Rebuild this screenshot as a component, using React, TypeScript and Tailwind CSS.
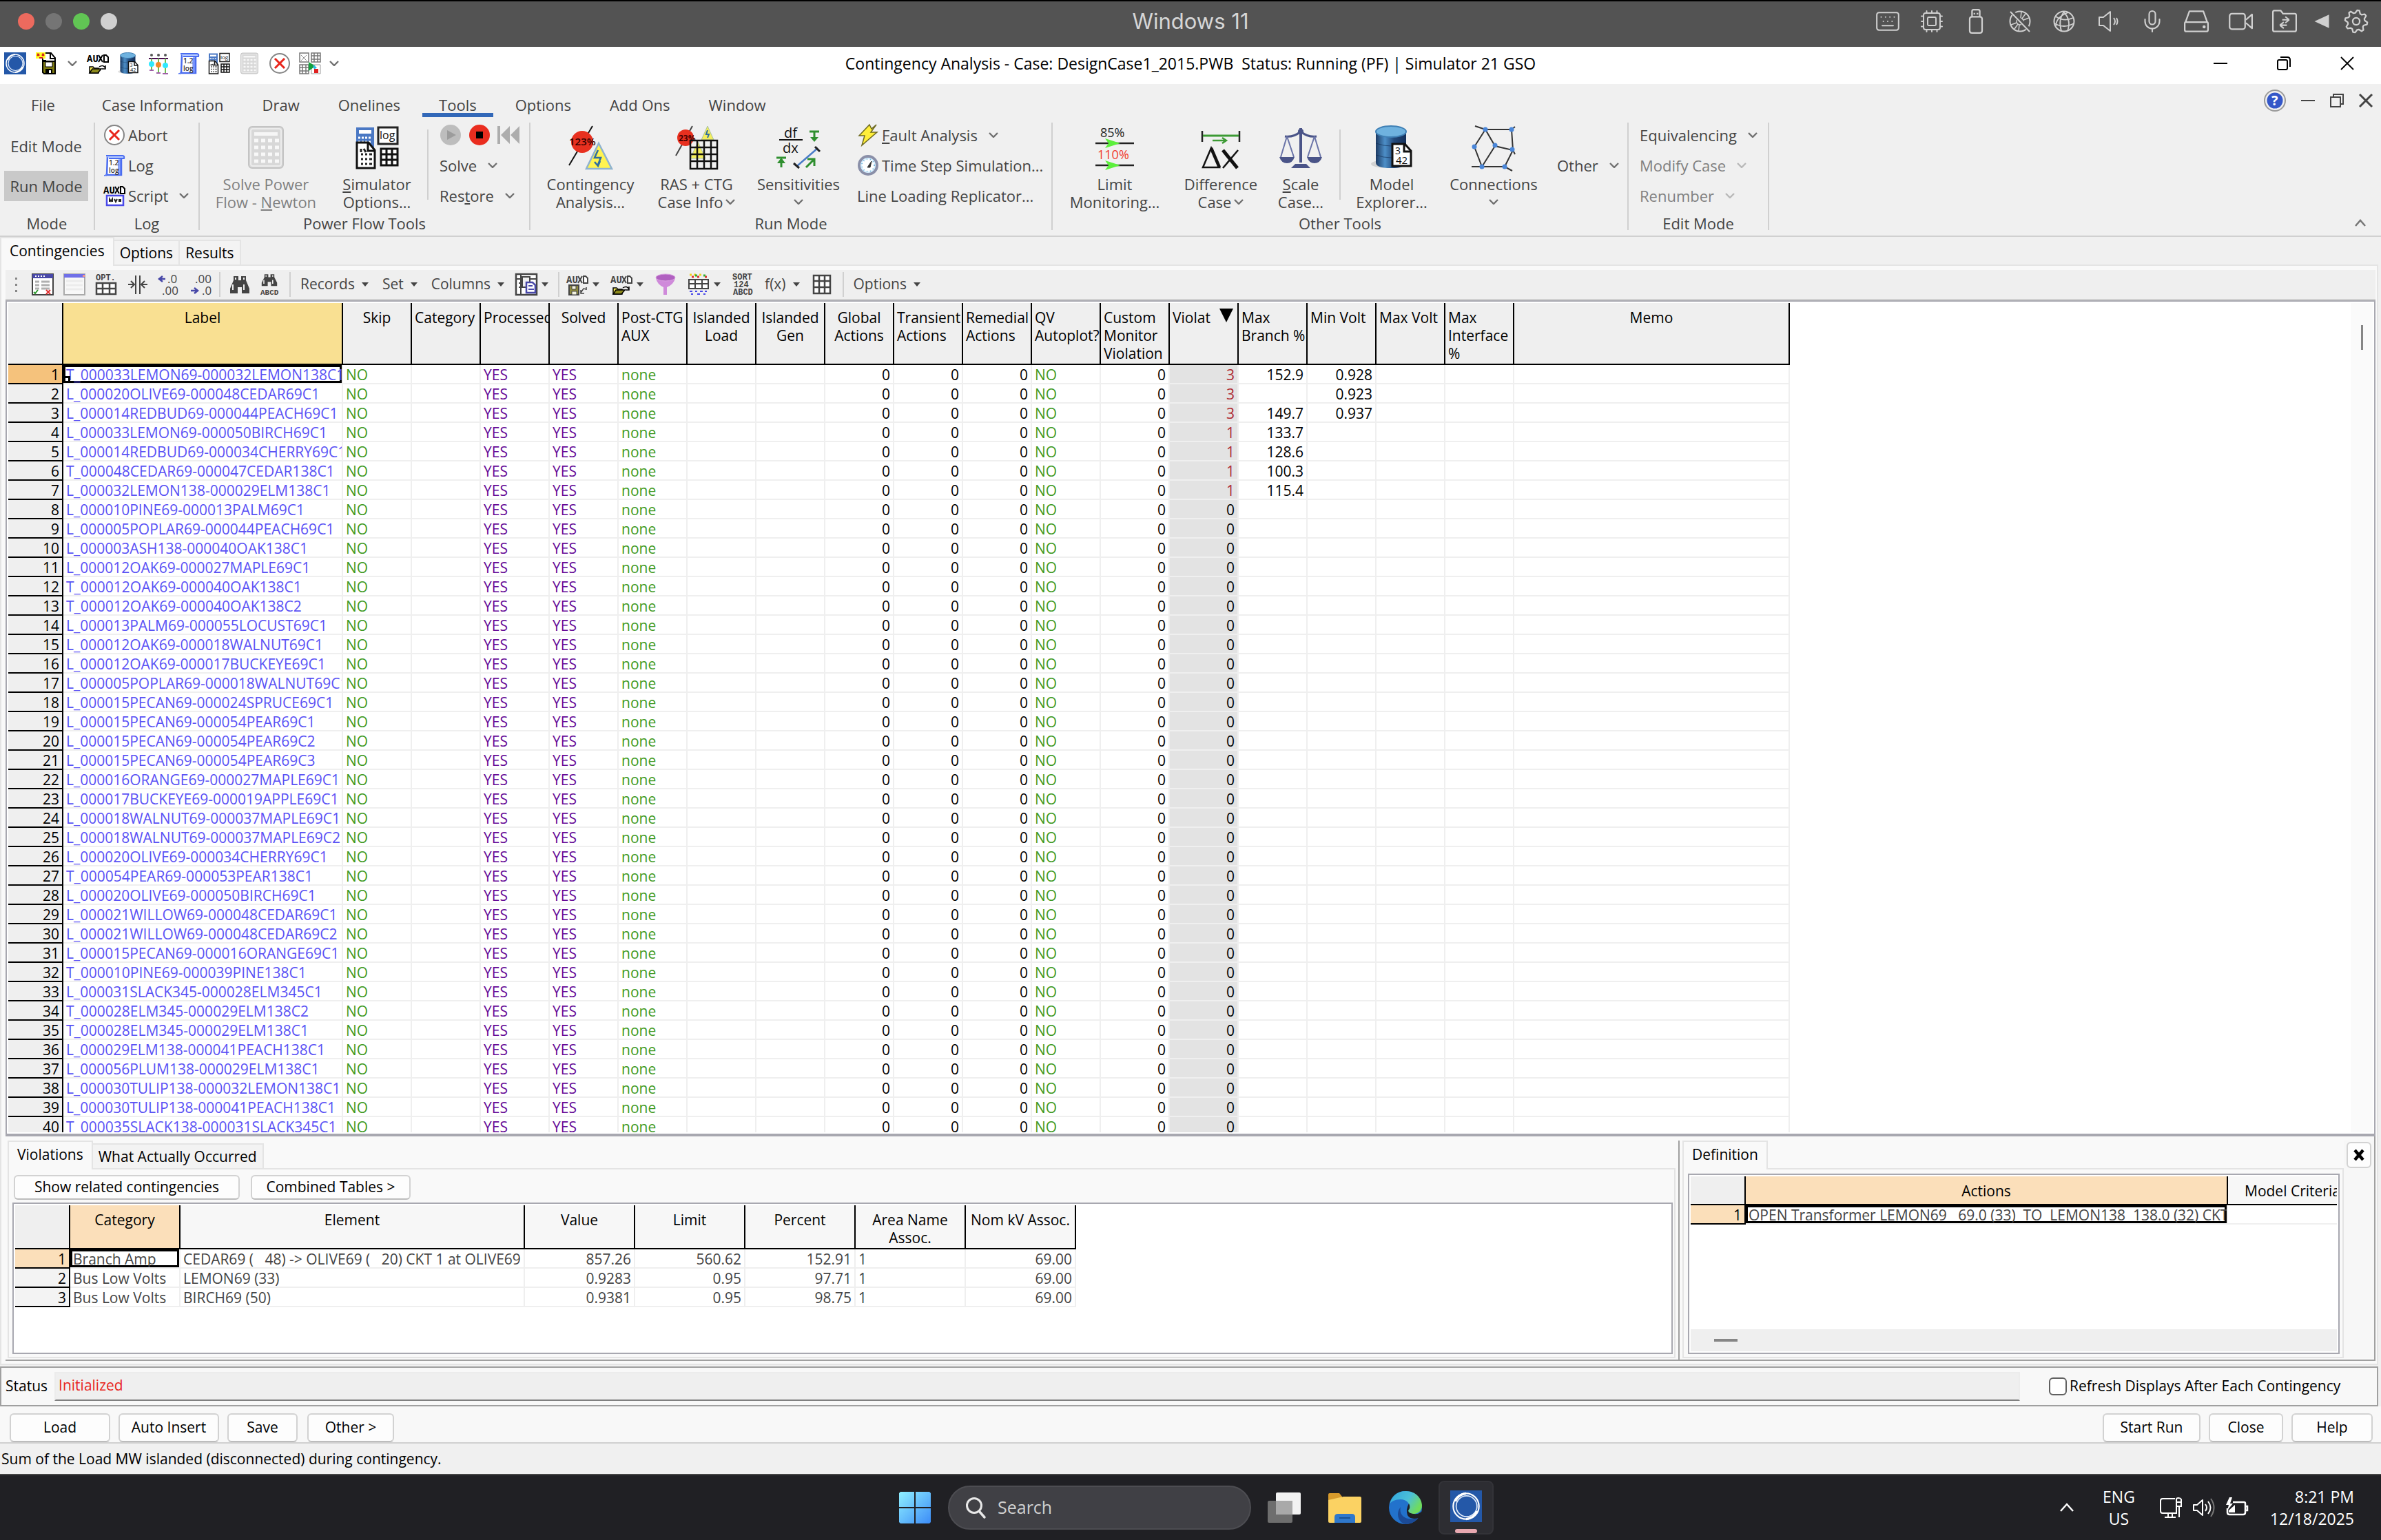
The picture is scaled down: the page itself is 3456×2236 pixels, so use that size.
import type { ReactNode } from 'react'
import { Cpu, Keyboard, Mic } from 'lucide-react'

const contingencies = [
  'T_000033LEMON69-000032LEMON138C1',
  'L_000020OLIVE69-000048CEDAR69C1',
  'L_000014REDBUD69-000044PEACH69C1',
  'L_000033LEMON69-000050BIRCH69C1',
  'L_000014REDBUD69-000034CHERRY69C1',
  'T_000048CEDAR69-000047CEDAR138C1',
  'L_000032LEMON138-000029ELM138C1',
  'L_000010PINE69-000013PALM69C1',
  'L_000005POPLAR69-000044PEACH69C1',
  'L_000003ASH138-000040OAK138C1',
  'L_000012OAK69-000027MAPLE69C1',
  'T_000012OAK69-000040OAK138C1',
  'T_000012OAK69-000040OAK138C2',
  'L_000013PALM69-000055LOCUST69C1',
  'L_000012OAK69-000018WALNUT69C1',
  'L_000012OAK69-000017BUCKEYE69C1',
  'L_000005POPLAR69-000018WALNUT69C1',
  'L_000015PECAN69-000024SPRUCE69C1',
  'L_000015PECAN69-000054PEAR69C1',
  'L_000015PECAN69-000054PEAR69C2',
  'L_000015PECAN69-000054PEAR69C3',
  'L_000016ORANGE69-000027MAPLE69C1',
  'L_000017BUCKEYE69-000019APPLE69C1',
  'L_000018WALNUT69-000037MAPLE69C1',
  'L_000018WALNUT69-000037MAPLE69C2',
  'L_000020OLIVE69-000034CHERRY69C1',
  'T_000054PEAR69-000053PEAR138C1',
  'L_000020OLIVE69-000050BIRCH69C1',
  'L_000021WILLOW69-000048CEDAR69C1',
  'L_000021WILLOW69-000048CEDAR69C2',
  'L_000015PECAN69-000016ORANGE69C1',
  'T_000010PINE69-000039PINE138C1',
  'L_000031SLACK345-000028ELM345C1',
  'T_000028ELM345-000029ELM138C2',
  'T_000028ELM345-000029ELM138C1',
  'L_000029ELM138-000041PEACH138C1',
  'L_000056PLUM138-000029ELM138C1',
  'L_000030TULIP138-000032LEMON138C1',
  'L_000030TULIP138-000041PEACH138C1',
  'T_000035SLACK138-000031SLACK345C1',
]

// violations, max branch %, min volt for the first rows
const results = [
  ['3', '152.9', '0.928'],
  ['3', '', '0.923'],
  ['3', '149.7', '0.937'],
  ['1', '133.7', ''],
  ['1', '128.6', ''],
  ['1', '100.3', ''],
  ['1', '115.4', ''],
]

const columns = [
  { lines: ['Skip'], center: true },
  { lines: ['Category'] },
  { lines: ['Processed'] },
  { lines: ['Solved'], center: true },
  { lines: ['Post-CTG', 'AUX'] },
  { lines: ['Islanded', 'Load'], center: true },
  { lines: ['Islanded', 'Gen'], center: true },
  { lines: ['Global', 'Actions'], center: true },
  { lines: ['Transient', 'Actions'] },
  { lines: ['Remedial', 'Actions'] },
  { lines: ['QV', 'Autoplot?'] },
  { lines: ['Custom', 'Monitor', 'Violation'] },
  { lines: ['Violat'], sorted: true },
  { lines: ['Max', 'Branch %'] },
  { lines: ['Min Volt'] },
  { lines: ['Max Volt'] },
  { lines: ['Max', 'Interface', '%'] },
]

const violations = [
  ['Branch Amp', 'CEDAR69 (   48) -> OLIVE69 (   20) CKT 1 at OLIVE69', '857.26', '560.62', '152.91', '1', '69.00'],
  ['Bus Low Volts', 'LEMON69 (33)', '0.9283', '0.95', '97.71', '1', '69.00'],
  ['Bus Low Volts', 'BIRCH69 (50)', '0.9381', '0.95', '98.75', '1', '69.00'],
]

/* ---------- icons ---------- */

function Icon({ size = 'size-8', box = 32, children }: { size?: string; box?: number; children: ReactNode }) {
  return (
    <svg viewBox={`0 0 ${box} ${box}`} className={`${size} shrink-0 overflow-visible`} fill="none" aria-hidden="true">
      {children}
    </svg>
  )
}

function Chevron({ light = false }: { light?: boolean }) {
  return (
    <svg viewBox="0 0 14 8" className="w-3.5 h-2 shrink-0" fill="none" aria-hidden="true">
      <path d="M1 1l6 6 6-6" stroke={light ? '#b8b8b8' : '#707070'} strokeWidth="2.4" />
    </svg>
  )
}

function Caret() {
  return (
    <svg viewBox="0 0 10 6" className="w-2.5 h-1.5 shrink-0" aria-hidden="true">
      <path d="M0 0h10l-5 6z" fill="#444" />
    </svg>
  )
}

function AuxText({ y = 14, fill = '#000' }: { y?: number; fill?: string }) {
  return (
    <>
      <text x="0" y={y} fontSize="14" fontFamily="Liberation Mono" fontWeight="700" fill={fill}>AU</text>
      <path d={`M17 ${y - 10}l6 10m0-10l-6 10`} stroke={fill} strokeWidth="2" />
      <path d={`M25 ${y - 10}h3l3 3v7h-6z`} fill="#fff" stroke={fill} strokeWidth="2" />
    </>
  )
}

const AppLogo = ({ size = 'size-8' }: { size?: string }) => (
  <Icon size={size}>
    <path d="M0 0h32v32H0z" fill="#2458a8" />
    <circle cx="16" cy="16" r="13" stroke="#fff" strokeWidth="1.500" />
    <circle cx="16.500" cy="16" r="10.500" stroke="#dce8fa" strokeWidth="1.200" />
    <path d="M5 11q3-7 11-8M27 21q-3 7-11 8" stroke="#fff" strokeWidth="2.200" />
  </Icon>
)

const SaveIcon = () => (
  <Icon>
    <path d="M12 1h12l6 7v12H16v-8h-4z" fill="#fff" stroke="#000" strokeWidth="2" />
    <path d="M23 1v8h7" stroke="#000" strokeWidth="2" />
    <path d="M2 0h14v9H2z" fill="#ffff20" />
    <path d="M4 2l3 3m0-3L4 5m7-3l3 3m0-3l-3 3M7 8h5" stroke="#d02020" strokeWidth="2" />
    <path d="M12 13h18v18H14l-2-2z" fill="#7d7a12" stroke="#000" strokeWidth="2" />
    <path d="M16 14h10v7H16z" fill="#fff" stroke="#000" />
    <path d="M16 24h10v7H16z" fill="#000" />
    <path d="M21 26h3v4h-3z" fill="#fff" />
  </Icon>
)

function Folder({ x = 0, y = 0 }: { x?: number; y?: number }) {
  return (
    <g transform={`translate(${x} ${y})`}>
      <path d="M3 3h5l2 2h6v7H3z" fill="#fff35a" stroke="#000" strokeWidth="1.500" />
      <path d="M3 12l4-6h13l-5 6z" fill="#8d8a1c" stroke="#000" strokeWidth="1.500" />
      <path d="M17 3q6-4 9 2m0-4v5h-5" stroke="#000" strokeWidth="1.500" />
    </g>
  )
}

const AuxOpen = ({ fill = '#000' }: { fill?: string }) => (
  <Icon>
    <AuxText fill={fill} />
    <Folder x={1} y={18} />
  </Icon>
)

const AuxSave = () => (
  <Icon>
    <AuxText fill="#444" />
    <path d="M4 17h14v14H4z" fill="#8d8a3c" stroke="#444" strokeWidth="2" />
    <path d="M8 18h6v5H8zM8 26h7v5H8z" fill="#f4f4e0" stroke="#444" />
    <path d="M21 28l4-6 4 1m0-3v4m-8 0v5h5" stroke="#444" strokeWidth="1.500" />
  </Icon>
)

function Cylinder({ size = 'size-8' }: { size?: string }) {
  return (
    <Icon size={size} box={64}>
      <defs>
        <linearGradient id="cyl" x1="0" x2="1" y1="0" y2="0">
          <stop offset="0" stopColor="#1c3a63" />
          <stop offset=".3" stopColor="#4d8fc8" />
          <stop offset=".6" stopColor="#234a7c" />
          <stop offset="1" stopColor="#15305a" />
        </linearGradient>
      </defs>
      <ellipse cx="26" cy="56" rx="24" ry="6" fill="#000" opacity=".12" />
      <path d="M9 10v44q0 8 22 8t22-8V10z" fill="url(#cyl)" />
      <ellipse cx="31" cy="9" rx="22" ry="8" fill="#6fb2df" stroke="#3f7fb4" strokeWidth="2" />
      <path d="M9 26q22 8 44 0M9 43q22 8 44 0" stroke="#0f2a50" opacity=".6" />
      <path d="M33 27h18l9 10v22H33z" fill="#fff" stroke="#111" strokeWidth="3" />
      <path d="M50 27v11h10" stroke="#111" strokeWidth="3" />
      <text x="37" y="42" fontSize="14" fill="#111">3</text>
      <text x="38" y="56" fontSize="15" fill="#111">42</text>
    </Icon>
  )
}

const ScadaIcon = () => (
  <Icon>
    <path d="M2 9h28" stroke="#4a1050" strokeWidth="2" />
    <path d="M6 9v16M16 9v20M26 9v22" stroke="#6fbf50" strokeWidth="2" />
    <circle cx="6" cy="4" r="2" fill="#555" />
    <circle cx="16" cy="4" r="2" fill="#555" />
    <circle cx="26" cy="4" r="2" fill="#555" />
    <circle cx="6" cy="17" r="4" fill="#2fe8ff" />
    <circle cx="16" cy="18" r="4" fill="#f08a2c" />
    <circle cx="26" cy="19" r="4" fill="#2fe8ff" />
    <path d="M3 26h6M13 30h6M22 31h8" stroke="#a060a8" strokeWidth="2" />
  </Icon>
)

const ScrollIcon = () => (
  <Icon>
    <path d="M6 3h20v27H5z" fill="#fff" stroke="#4a6cf0" strokeWidth="2.500" />
    <path d="M4 2h24q3 0 2 4H8" fill="#bcd0ff" stroke="#4a6cf0" strokeWidth="2" />
    <path d="M1 31q3 0 4-4v4zM22 8h3v22h-3z" fill="#8ea8ff" stroke="#4a6cf0" />
    <text x="8" y="16" fontSize="10" fontWeight="600" fill="#333">1.2</text>
    <text x="8" y="27" fontSize="10" fontWeight="600" fill="#333">log</text>
  </Icon>
)

const CalcIcon = ({ size = 'size-8' }: { size?: string }) => (
  <Icon size={size} box={64}>
    <rect x="7" y="2" width="50" height="60" rx="5" fill="#d8d8d8" stroke="#c4c4c4" strokeWidth="2" />
    <rect x="10" y="5" width="44" height="54" rx="3" stroke="#ececec" strokeWidth="2" />
    <path d="M15 10h34v5H15z" fill="#f6f6f6" />
    {[20, 30, 40, 50].map((y) => (
      <path key={y} d={`M15 ${y + 2}h6m4 0h6m4 0h6m4 0h6`} stroke="#f8f8f8" strokeWidth="5" />
    ))}
  </Icon>
)

const OptionsIcon = ({ size = 'size-8' }: { size?: string }) => (
  <Icon size={size} box={64}>
    <path d="M2 3h26v34H2z" fill="#4a78c4" />
    <path d="M6 7h18v5H6z" fill="#fff" />
    <path d="M5 18h20M5 24h20M5 30h14" stroke="#fff" strokeWidth="3" strokeDasharray="3 2" />
    <path d="M34 3h28v24H34z" fill="#fff" stroke="#222" strokeWidth="3" />
    <text x="36" y="20" fontSize="16" fill="#111">log</text>
    <path d="M3 25h17l9 11v26H3z" fill="#fff" stroke="#111" strokeWidth="3" />
    <path d="M19 25v12h10" stroke="#111" strokeWidth="3" />
    <path d="M9 42h3m3 0h3m3 0h4M9 49h3m3 0h3m3 0h4M9 56h3m3 0h3m3 0h4M9 34v5m4-5l3 5" stroke="#222" strokeWidth="3" />
    <path d="M38 34h24v24H38zM46 34v24M54 34v24M38 42h24M38 50h24" fill="#fff" stroke="#111" strokeWidth="3" />
  </Icon>
)

const AbortIcon = () => (
  <Icon>
    <circle cx="16" cy="16" r="14" fill="#fff" stroke="#858585" strokeWidth="2" />
    <path d="M9 9l14 14M23 9L9 23" stroke="#e8261c" strokeWidth="3" />
  </Icon>
)

const CaseGridIcon = () => (
  <Icon>
    <path d="M1 1h13v13H1zM18 1h13v13H18zM1 18h13v13H1zM5 18v13M10 18v13M1 22h13M1 27h13M22 1v13M27 1v13M18 5h13M18 10h13" stroke="#777" strokeWidth="1.500" />
    <path d="M3 4l8 8m0-8l-8 8" stroke="#888" />
    <path d="M18 18h13v13H18z" stroke="#999" />
    <path d="M14 14l10 6-10 7z" fill="#13a03c" />
    <path d="M20 18l6 4-4 3z" fill="#28b8e8" />
    <path d="M22 24h6v6h-6z" fill="#e02020" />
  </Icon>
)

const ScriptIcon = () => (
  <Icon>
    <AuxText y={13} />
    <path d="M5 16h24v14H5z" fill="#fff" stroke="#4a4ae8" strokeWidth="2.500" />
    <path d="M9 25v-4l2 3 2-3v4m3-4l2 4 2-4m3 0v4m2-4v4" stroke="#222" strokeWidth="2" />
  </Icon>
)

const ContingencyIcon = () => (
  <Icon size="size-16" box={64}>
    <path d="M35 1L1 58" stroke="#111" strokeWidth="2" />
    <circle cx="20" cy="24" r="16" fill="#e8301f" />
    <text x="1" y="29" fontSize="15" fontWeight="600" fill="#300">123%</text>
    <path d="M44 26l19 37H26z" fill="#fff350" stroke="#8fb3cf" strokeWidth="2.500" />
    <path d="M43 36l-5 11h9l-4 10m-5-4l5 6 3-7" stroke="#2f6da0" strokeWidth="2.500" />
  </Icon>
)

const RasIcon = () => (
  <Icon size="size-16" box={64}>
    <path d="M26 1L2 44" stroke="#444" strokeWidth="2" />
    <circle cx="16" cy="18" r="12" fill="#e8301f" />
    <text x="6" y="23" fontSize="12" fontWeight="700" fill="#400">23%</text>
    <path d="M48 1l9 20H39zM34 24l11 24H23z" fill="#f4ee5c" stroke="#a9c3a0" />
    <path d="M48 7l-2 6h4l-2 5" stroke="#2f6da0" strokeWidth="2" />
    <path d="M23 22h39v41H23zM33 22v41M43 22v41M53 22v41M23 32h39M23 42h39M23 52h39" stroke="#111" strokeWidth="2.500" />
  </Icon>
)

const SensIcon = () => (
  <Icon size="size-16" box={64}>
    <text x="11" y="18" fontSize="20" fill="#111">df</text>
    <path d="M4 21h34" stroke="#111" strokeWidth="2" />
    <text x="9" y="40" fontSize="20" fill="#111">dx</text>
    <path d="M48 9h14M55 9v12M0 47h14M7 61V49" stroke="#2f8f2f" strokeWidth="3" />
    <path d="M49 17l6 7 6-7zM1 55l6-8 6 8z" fill="#2f8f2f" />
    <path d="M30 59l30-26" stroke="#4a7cc8" strokeWidth="2.500" />
    <path d="M56 31l7 7M25 55l8 7" stroke="#222" strokeWidth="3" />
    <path d="M43 61l11-11m-9-1h10v10" stroke="#2f8f2f" strokeWidth="3" />
  </Icon>
)

const BoltIcon = () => (
  <Icon>
    <path d="M18 1L3 17h8L7 31l22-19h-9l8-11-7 6z" fill="#ffee3a" stroke="#6e6a20" strokeWidth="1.500" />
  </Icon>
)

const StopwatchIcon = () => (
  <Icon>
    <circle cx="16" cy="16" r="13" fill="#d8f0ff" stroke="#8a8fa8" strokeWidth="4" />
    <circle cx="16" cy="16" r="9" fill="#fff" stroke="#6ab0d8" strokeDasharray="1 4" strokeWidth="2" />
    <path d="M15 19l6-9-2 9z" fill="#333" stroke="#333" />
  </Icon>
)

const LimitIcon = () => (
  <Icon size="size-16" box={64}>
    <text x="11" y="17" fontSize="18" fill="#222">85%</text>
    <path d="M4 26h56M4 58h56" stroke="#222" strokeWidth="2.500" />
    <path d="M18 19l22 7-22 7 5-7zM18 51l22 7-22 7 5-7z" fill="#5cf03c" />
    <text x="7" y="49" fontSize="18" fill="#f03c30">110%</text>
  </Icon>
)

const DifferenceIcon = () => (
  <Icon size="size-16" box={64}>
    <path d="M5 8v16M59 8v16" stroke="#222" strokeWidth="2.500" />
    <path d="M6 15h52" stroke="#3c9a34" strokeWidth="3" />
    <path d="M20 22h18M34 18l6 4-6 4" stroke="#3c9a34" strokeWidth="2.500" />
    <path d="M6 61L18 33l12 28z" stroke="#111" strokeWidth="2.500" />
    <path d="M18 33l12 28" stroke="#111" strokeWidth="4.500" />
    <path d="M35 36l21 26" stroke="#111" strokeWidth="5" />
    <path d="M57 36L35 62" stroke="#111" strokeWidth="2.500" />
  </Icon>
)

const ScaleIcon = () => (
  <Icon size="size-16" box={64}>
    <path d="M32 4v50" stroke="#4a5488" strokeWidth="4" />
    <path d="M9 16q12 2 23-7 11 9 23 7" stroke="#4a5488" strokeWidth="3" />
    <path d="M12 16L3 46M12 16l10 30M52 16l-10 30M52 16l9 30" stroke="#6a74a8" strokeWidth="2" />
    <path d="M1 46h22q-3 9-11 9T1 46zM41 46h22q-3 9-11 9t-11-9zM24 56h16l6 6H18z" fill="#4a5488" />
    <circle cx="32" cy="9" r="4" fill="#4a5488" />
  </Icon>
)

const ConnectionsIcon = () => (
  <Icon size="size-16" box={64}>
    <path d="M5 1l15 5h38l5-4M20 6L4 31l11 29M58 6l2 30-12 24M20 6l14 24 26 6 3 6M34 30L15 60M0 60h48l11 6" stroke="#333" strokeWidth="2" />
    {[[20, 6], [58, 6], [4, 31], [34, 29], [59, 35], [15, 60], [48, 60]].map(([x, y]) => (
      <circle key={`${x}-${y}`} cx={x} cy={y} r="3.500" fill="#4a86d8" />
    ))}
  </Icon>
)

const Binoculars = ({ abcd = false }: { abcd?: boolean }) => (
  <Icon>
    <g transform={abcd ? 'translate(3 0) scale(.8 .68)' : 'translate(1 2)'}>
      <path d="M6 2h7v6h4V2h7v6l5 12v7H18v-9h-6v9H1v-7L6 8z" fill="#444" />
      <path d="M5 14v8M21 14v8M9 4v3M21 4v3" stroke="#eee" strokeWidth="2" />
    </g>
    {abcd && <text x="2" y="31" fontSize="11" fontFamily="Liberation Mono" fontWeight="700" fill="#444">ABCD</text>}
  </Icon>
)

/* ---------- host machine bar ---------- */

const gear = Array.from({ length: 32 }, (_, i) => {
  const r = i % 4 < 2 ? 14.5 : 11
  const a = ((i * 11.25 + 5) * Math.PI) / 180
  return `${(16 + r * Math.cos(a)).toFixed(1)},${(16 + r * Math.sin(a)).toFixed(1)}`
}).join(' ')

const hostIcons = [
  <Keyboard className="size-[38px]" strokeWidth={1.3} />,
  <Cpu className="size-9" strokeWidth={1.3} />,
  <Icon size="size-9">
    <path d="M11 10V3q0-2 2-2h6q2 0 2 2v7M8 13q0-3 3-3h10q3 0 3 3v15q0 3-3 3H11q-3 0-3-3zM14 5v2m4-2v2" stroke="currentColor" strokeWidth="2" />
  </Icon>,
  <Icon>
    <circle cx="16" cy="16" r="14.500" stroke="currentColor" strokeWidth="2" />
    <circle cx="16" cy="16" r="5" stroke="currentColor" strokeWidth="1.500" />
    <path d="M18 2l-1 9M29 11l-8 3M14 30l1-9M3 21l8-3M24 5l-5 7M8 27l5-7" stroke="currentColor" strokeWidth="1.500" />
    <path d="M3 1l28 29" stroke="#535353" strokeWidth="6" />
    <path d="M2 2l28 29" stroke="currentColor" strokeWidth="2" />
  </Icon>,
  <Icon>
    <circle cx="16" cy="16" r="14.500" stroke="currentColor" strokeWidth="2" />
    <path d="M16 2q-9 12-4 28M15 2q12 12 6 28M4 9q12 8 25 2M2 19q14 8 28 0M22 3Q4 10 4 23" stroke="currentColor" strokeWidth="1.800" />
  </Icon>,
  <Icon>
    <path d="M3 10h6l10-8v28L9 22H3zM24 11q4 5 0 10M28 11q3 5 0 10" stroke="currentColor" strokeWidth="2" strokeLinejoin="round" />
  </Icon>,
  <Mic className="size-9" strokeWidth={1.4} />,
  <Icon size="size-9">
    <path d="M7 3h18l5 14H2zM2 17h28q1 0 1 2v8q0 2-2 2H3q-2 0-2-2v-8q0-2 1-2z" stroke="currentColor" strokeWidth="2" strokeLinejoin="round" />
    <circle cx="26" cy="23" r="2" fill="currentColor" />
  </Icon>,
  <Icon size="size-9">
    <rect x="2" y="6" width="20" height="20" rx="3" stroke="currentColor" strokeWidth="2" />
    <path d="M23 14l8-7v18l-8-7" stroke="currentColor" strokeWidth="2" strokeLinejoin="round" />
  </Icon>,
  <Icon size="size-9">
    <path d="M1 4q0-2 2-2h8l3 4h15q2 0 2 2v19q0 2-2 2H3q-2 0-2-2z" stroke="currentColor" strokeWidth="2" />
    <path d="M13 14h9m0 0l-5-4m5 4l-5 4M19 21h-9m0 0l5-4m-5 4l5 4" stroke="currentColor" strokeWidth="1.800" />
  </Icon>,
]

function HostBar() {
  return (
    <header className="grid h-[68px] shrink-0 grid-cols-[1fr_auto_1fr] items-center border-t-2 border-black bg-[#535353] pb-2 text-[#d6d6d6]">
      <div className="flex gap-4 pl-[26px]">
        <button aria-label="Close" className="size-6 rounded-full bg-[#ec6a5e]" />
        <button aria-label="Minimize" className="size-6 rounded-full bg-[#757575]" />
        <button aria-label="Zoom" className="size-6 rounded-full bg-[#61c554]" />
        <button aria-label="Coherence" className="size-6 rounded-full bg-[#d0d0d0]" />
      </div>
      <h1 className="font-[Inter,sans-serif] text-[31px]">Windows 11</h1>
      <div className="flex items-center justify-end pr-[18px] text-[#d0d0d0]">
        {hostIcons.map((icon, i) => (
          <span key={i} className="flex w-16 justify-center">{icon}</span>
        ))}
        <div className="flex items-center gap-5 pl-2.5">
          <Icon size="size-6">
            <path d="M30 3v26L2 16z" fill="currentColor" />
          </Icon>
          <Icon size="size-9">
            <polygon points={gear} stroke="currentColor" strokeWidth="2" strokeLinejoin="round" />
            <circle cx="16" cy="16" r="4.500" stroke="currentColor" strokeWidth="2" />
          </Icon>
        </div>
      </div>
    </header>
  )
}

/* ---------- application title ---------- */

function TitleBar() {
  return (
    <div className="grid h-[54px] shrink-0 grid-cols-[1fr_auto_1fr] items-center bg-white pb-1.5">
      <div className="flex items-center gap-3 pl-1.5">
        <AppLogo />
        <div className="flex items-center gap-4 pr-0.5">
          <SaveIcon />
          <Chevron />
        </div>
        <AuxOpen />
        <Cylinder />
        <ScadaIcon />
        <ScrollIcon />
        <OptionsIcon />
        <CalcIcon />
        <AbortIcon />
        <CaseGridIcon />
        <Chevron />
      </div>
      <h2 className="text-[23px] whitespace-pre">
        Contingency Analysis - Case: DesignCase1_2015.PWB  Status: Running (PF) | Simulator 21 GSO
      </h2>
      <div className="flex items-center justify-end gap-[72px] pr-[39px]">
        <button aria-label="Minimize window"><Icon size="size-5" box={20}><path d="M0 10h20" stroke="#000" strokeWidth="2" /></Icon></button>
        <button aria-label="Restore window">
          <Icon size="size-5" box={20}>
            <rect x="1" y="5" width="14" height="14" rx="2" stroke="#000" strokeWidth="2" />
            <path d="M5 1h10q4 0 4 4v10" stroke="#000" strokeWidth="2" />
          </Icon>
        </button>
        <button aria-label="Close window"><Icon size="size-5" box={20}><path d="M1 1l18 18M19 1L1 19" stroke="#000" strokeWidth="1.800" /></Icon></button>
      </div>
    </div>
  )
}

/* ---------- ribbon ---------- */

const menus = ['Case Information', 'Draw', 'Onelines', 'Tools', 'Options', 'Add Ons', 'Window']

function Menu() {
  return (
    <nav className="flex h-14 shrink-0 text-[#444]">
      <button className="ml-[21px] h-12 px-6 pt-3">File</button>
      <div className="ml-5 flex flex-1 gap-2">
        {menus.map((m) => (
          <button key={m} className={`h-12 border-b-[6px] px-6 pt-3.5 ${m === 'Tools' ? 'border-[#3268b8]' : 'border-transparent'}`}>
            {m}
          </button>
        ))}
      </div>
      <div className="flex h-12 items-center gap-[22px] pr-3">
        <button aria-label="Help">
          <Icon>
            <circle cx="16" cy="16" r="15" fill="#f0f0f0" stroke="#999" strokeWidth="2" />
            <circle cx="16" cy="16" r="11.500" fill="#3457c8" />
            <text x="11" y="23" fontSize="20" fontWeight="700" fill="#fff">?</text>
          </Icon>
        </button>
        <button aria-label="Minimize view"><Icon size="size-5" box={20}><path d="M0 10h20" stroke="#444" strokeWidth="2" /></Icon></button>
        <button aria-label="Restore view">
          <Icon size="size-5" box={20}>
            <path d="M1 5h14v14H1zM5 5V1h14v14h-4" stroke="#444" strokeWidth="2" />
          </Icon>
        </button>
        <button aria-label="Close view"><Icon size="size-5" box={20}><path d="M1 1l18 18M19 1L1 19" stroke="#444" strokeWidth="3" /></Icon></button>
      </div>
    </nav>
  )
}

function Group({ label, width, children }: { label: string; width: string; children: ReactNode }) {
  return (
    <section className={`${width} flex h-[156px] shrink-0 flex-col border-r-2 border-[#d0d0d0]`}>
      <div className="flex h-[132px] shrink-0">{children}</div>
      <p className="text-center leading-7">{label}</p>
    </section>
  )
}

function BigButton({ icon, width, disabled, children }: { icon: ReactNode; width: string; disabled?: boolean; children: ReactNode }) {
  return (
    <button disabled={disabled} className={`${width} flex h-[132px] shrink-0 flex-col items-center pt-1 leading-[26px] disabled:text-[#808080]`}>
      {icon}
      <span className="mt-2 whitespace-nowrap">{children}</span>
    </button>
  )
}

function SmallButton({ icon, drop, disabled, children }: { icon?: ReactNode; drop?: boolean; disabled?: boolean; children: ReactNode }) {
  return (
    <button disabled={disabled} className="flex h-11 items-center whitespace-nowrap disabled:text-[#808080]">
      {icon && <span className="mr-1">{icon}</span>}
      {children}
      {drop && <span className="ml-4"><Chevron light={disabled} /></span>}
    </button>
  )
}

const Rule = () => <div className="mt-2.5 h-[102px] w-0.5 bg-[#d0d0d0]" />

function Ribbon() {
  return (
    <div className="flex h-[166px] shrink-0 items-start border-b-2 border-[#d0d0d0] text-[#444]">
      <Group label="Mode" width="w-[138px]">
        <div className="flex flex-1 flex-col gap-3.5 pl-1.5 pr-2 pt-3">
          <button className="h-11 whitespace-nowrap">Edit Mode</button>
          <button className="h-11 whitespace-nowrap bg-[#c9c9c9]">Run Mode</button>
        </div>
      </Group>
      <Group label="Log" width="w-[152px]">
        <div className="-mt-1 pl-3">
          <SmallButton icon={<AbortIcon />}>Abort</SmallButton>
          <SmallButton icon={<ScrollIcon />}>Log</SmallButton>
          <SmallButton icon={<ScriptIcon />} drop>Script</SmallButton>
        </div>
      </Group>
      <Group label="Power Flow Tools" width="w-[480px]">
        <BigButton width="ml-2 w-[176px]" icon={<CalcIcon size="size-16" />} disabled>
          Solve Power<br />Flow - <u>N</u>ewton
        </BigButton>
        <BigButton width="w-[146px]" icon={<OptionsIcon size="size-16" />}>
          <u>S</u>imulator<br />Options...
        </BigButton>
        <Rule />
        <div className="-mt-1 pl-4">
          <div className="flex h-11 items-center gap-2.5">
            <button aria-label="Play">
              <Icon><circle cx="16" cy="16" r="15" fill="#bdbdbd" /><path d="M11 9l13 7-13 7z" fill="#9c9c9c" /></Icon>
            </button>
            <button aria-label="Stop">
              <Icon><circle cx="16" cy="16" r="15" fill="#ea2d1f" /><path d="M11 11h10v10H11z" fill="#000" /></Icon>
            </button>
            <button aria-label="Rewind">
              <Icon><path d="M0 3h4v26H0zM18 3v26L5 16zM32 3v26L19 16z" fill="#adadad" /></Icon>
            </button>
          </div>
          <SmallButton drop>Solve</SmallButton>
          <SmallButton drop><span>Res<u>t</u>ore</span></SmallButton>
        </div>
      </Group>
      <Group label="Run Mode" width="w-[758px]">
        <BigButton width="ml-2.5 w-[154px]" icon={<ContingencyIcon />}>
          Contin<u>g</u>ency<br />Analysis...
        </BigButton>
        <BigButton width="w-[154px]" icon={<RasIcon />}>
          RAS + CTG
          <span className="flex items-center gap-1">Case Info <Chevron /></span>
        </BigButton>
        <BigButton width="w-[142px]" icon={<SensIcon />}>
          Sensitivities
          <span className="flex h-[26px] items-center justify-center"><Chevron /></span>
        </BigButton>
        <div className="-mt-1 pl-3.5">
          <SmallButton icon={<BoltIcon />} drop><span><u>F</u>ault Analysis</span></SmallButton>
          <SmallButton icon={<StopwatchIcon />}>Time Step Simulation...</SmallButton>
          <SmallButton>Line Loading Replicator...</SmallButton>
        </div>
      </Group>
      <Group label="Other Tools" width="w-[836px]">
        <BigButton width="ml-3 w-[156px]" icon={<LimitIcon />}>
          Limit<br />Monitoring...
        </BigButton>
        <BigButton width="w-[152px]" icon={<DifferenceIcon />}>
          Difference
          <span className="flex items-center justify-center gap-1">Case <Chevron /></span>
        </BigButton>
        <BigButton width="w-[80px]" icon={<ScaleIcon />}>
          <u>S</u>cale<br />Case...
        </BigButton>
        <div className="pl-4"><Rule /></div>
        <BigButton width="ml-3.5 w-[120px]" icon={<Cylinder size="size-16" />}>
          Model<br />Explorer...
        </BigButton>
        <BigButton width="ml-3.5 w-[148px]" icon={<ConnectionsIcon />}>
          Connections
          <span className="flex h-[26px] items-center justify-center"><Chevron /></span>
        </BigButton>
        <div className="pl-[18px] pt-10">
          <SmallButton drop>Other</SmallButton>
        </div>
      </Group>
      <Group label="Edit Mode" width="w-[204px]">
        <div className="-mt-1 pl-4">
          <SmallButton drop>Equivalencing</SmallButton>
          <SmallButton drop disabled>Modify Case</SmallButton>
          <SmallButton drop disabled>Renumber</SmallButton>
        </div>
      </Group>
      <button aria-label="Collapse ribbon" className="mr-5 ml-auto self-end pb-2">
        <Icon size="size-5" box={20}><path d="M3 14l7-8 7 8" stroke="#777" strokeWidth="2.500" /></Icon>
      </button>
    </div>
  )
}

/* ---------- tabs and grid toolbar ---------- */

function Tab({ active, children }: { active?: boolean; children: ReactNode }) {
  return active ? (
    <button role="tab" aria-selected className="h-[42px] border-x-2 border-t-2 border-[#e4e4e4] bg-[#f9f9f9] px-3 pb-0.5">
      {children}
    </button>
  ) : (
    <button role="tab" aria-selected={false} className="h-[38px] border-r-2 border-y-2 border-[#e4e4e4] bg-[#f3f3f3] px-2 pt-0.5">
      {children}
    </button>
  )
}

const Sep = () => <div className="h-9 w-0.5 bg-[#d0d0d0]" />

function DropText({ children }: { children: ReactNode }) {
  return <button className="flex items-center gap-2.5 text-[#444]">{children}<Caret /></button>
}

function DropIcon({ children }: { children: ReactNode }) {
  return <button className="flex items-center gap-1.5">{children}<Caret /></button>
}

function GridToolbar() {
  return (
    <div role="toolbar" className="flex h-11 shrink-0 items-center border-b-2 border-[#d0d0d0] bg-[#efefef]">
      <div className="flex w-[38px] flex-col items-center gap-1.5 pr-2">
        <i className="size-[3px] bg-[#888]" />
        <i className="size-[3px] bg-[#888]" />
        <i className="size-[3px] bg-[#888]" />
      </div>
      <div className="flex items-center gap-3.5">
        <Icon>
          <path d="M1 1h30v30H1z" fill="#fff" stroke="#444" strokeWidth="2" />
          <path d="M1 1h30v6H1z" fill="#4848a8" />
          <path d="M5 4h14" stroke="#fff" strokeDasharray="2 2" strokeWidth="2" />
          <path d="M5 12h6m3 0h12M5 17h6m3 0h12M5 22h6m3 0h12" stroke="#b0b0b0" strokeWidth="3" />
          <path d="M3 27l2 2 4-5" stroke="#2c9a2c" strokeWidth="2" />
          <path d="M21 24l6 6m0-6l-6 6" stroke="#e03030" strokeWidth="2" />
        </Icon>
        <Icon>
          <path d="M1 1h30v30H1z" fill="#f8f8f8" stroke="#aaa" strokeWidth="2" />
          <path d="M1 1h30v5H1z" fill="#7070e8" />
          <path d="M28 2h3v3h-3z" fill="#f09090" />
          <path d="M4 11h24M4 17h24M4 23h24" stroke="#ececec" strokeWidth="3" />
        </Icon>
        <Icon>
          <text x="1" y="10" fontSize="12" fontFamily="Liberation Mono" fontWeight="700" fill="#444">OPT.</text>
          <path d="M2 14h28v16H2zM11 14v16M21 14v16M2 22h28" fill="#fff" stroke="#444" strokeWidth="2.500" />
        </Icon>
        <Icon>
          <path d="M13 3v27M19 3v27M2 16h8m-4-5l5 5-5 5M30 16h-8m4-5l-5 5 5 5" stroke="#444" strokeWidth="2" />
        </Icon>
        <Icon>
          <path d="M1 8h9M6 4L1 8l5 4" stroke="#4848a8" strokeWidth="2.500" />
          <text x="13" y="14" fontSize="17" fill="#444">.0</text>
          <text x="5" y="31" fontSize="17" fill="#444">.00</text>
        </Icon>
        <Icon>
          <text x="7" y="14" fontSize="17" fill="#444">.00</text>
          <path d="M1 25h10M6 21l5 4-5 4" stroke="#4848a8" strokeWidth="2.500" />
          <text x="17" y="31" fontSize="17" fill="#444">.0</text>
        </Icon>
      </div>
      <div className="ml-2.5 flex items-center gap-3">
        <Sep />
        <Binoculars />
        <Binoculars abcd />
        <Sep />
      </div>
      <div className="ml-3.5 flex items-center gap-5">
        <DropText>Records</DropText>
        <DropText>Set</DropText>
        <DropText>Columns</DropText>
      </div>
      <div className="ml-4 flex items-center gap-3.5">
        <DropIcon>
          <Icon>
            <path d="M1 1h30v30H1z" fill="#fff" stroke="#444" strokeWidth="2.500" />
            <path d="M1 8h30M8 1v30M5 14h8M5 20h8" stroke="#444" strokeWidth="2" />
            <path d="M10 5h11v15H10z" fill="#eee" stroke="#444" strokeWidth="2" />
            <path d="M16 13h9l4 4v11H16z" fill="#fff" stroke="#4848a8" strokeWidth="2.500" />
            <path d="M19 18h6m-6 5h8" stroke="#4848a8" strokeWidth="2" />
          </Icon>
        </DropIcon>
        <Sep />
      </div>
      <div className="ml-2.5 flex items-center gap-4">
        <DropIcon><AuxSave /></DropIcon>
        <DropIcon><AuxOpen fill="#444" /></DropIcon>
        <Icon>
          <path d="M2 7q2 9 11 13v11h5V20q10-4 12-13-14 8-28 0z" fill="#cf8ada" />
          <ellipse cx="16" cy="6" rx="14" ry="5" fill="#b060c0" stroke="#d8a0e0" />
        </Icon>
        <DropIcon>
          <Icon>
            <path d="M3 2h3m3 0h3m5 0h3" stroke="#f0d020" strokeWidth="3" />
            <path d="M6 5h3m5 0h3m8 0h3" stroke="#e03030" strokeWidth="3" />
            <path d="M11 3h3m9 0h3" stroke="#30b030" strokeWidth="3" />
            <path d="M2 9h28v13H2zM11 9v13M21 9v13M2 15h28" fill="#fff" stroke="#444" strokeWidth="2" />
            <path d="M3 26h4m4 0h3m4 0h4m3 0h3M5 30h3m6 0h4m5 0h3" stroke="#4848e8" strokeWidth="2" />
          </Icon>
        </DropIcon>
        <Icon>
          <g fontSize="12" fontFamily="Liberation Mono" fontWeight="700" fill="#444">
            <text x="1" y="9">SORT</text>
            <text x="3" y="20">124</text>
            <text x="2" y="31">ABCD</text>
          </g>
        </Icon>
        <DropText>f(x)</DropText>
        <Icon>
          <path d="M4 3h24v26H4zM12 3v26M20 3v26M4 11h24M4 20h24" fill="#fff" stroke="#444" strokeWidth="2.500" />
        </Icon>
      </div>
      <div className="ml-3.5 flex items-center gap-3.5">
        <Sep />
        <DropText>Options</DropText>
      </div>
    </div>
  )
}

/* ---------- tables ---------- */

const th = 'overflow-hidden whitespace-nowrap border-r-2 border-b-2 border-black px-1 pt-2 align-top font-normal leading-[26px]'
const td = 'h-7 overflow-hidden whitespace-pre border-r-2 border-b-2 border-[#efefef] px-1 pt-0.5 leading-6'
const rowHead = 'h-7 border-r-2 border-b-2 border-black px-1 pt-0.5 text-right font-normal leading-6'
const selected = 'shadow-[inset_0_0_0_3px_#000]'

function ContingencyTable() {
  return (
    <table className="w-[2586px] table-fixed border-separate border-spacing-0">
      <colgroup>
        <col className="w-20" />
        <col className="w-[406px]" />
        {columns.map((c) => <col key={c.lines.join()} className="w-[100px]" />)}
        <col className="w-[400px]" />
      </colgroup>
      <thead>
        <tr className="h-[90px] bg-[#efefef]">
          <td className="border-r-2 border-b-2 border-black" />
          <th scope="col" className={`${th} bg-[#f9e092]`}>Label</th>
          {columns.map((c) => (
            <th key={c.lines.join()} scope="col" className={`${th} ${c.center ? 'text-center' : 'text-left'}`}>
              {c.sorted ? (
                <span className="flex items-start justify-between">
                  {c.lines[0]}
                  <svg viewBox="0 0 20 20" className="mr-0.5 size-5" aria-label="sorted descending"><path d="M0 0h20L10 20z" /></svg>
                </span>
              ) : (
                c.lines.map((l) => <span key={l} className="block">{l}</span>)
              )}
            </th>
          ))}
          <th scope="col" className={th}>Memo</th>
        </tr>
      </thead>
      <tbody>
        {contingencies.map((label, i) => {
          const [count, branch, volt] = results[i] ?? ['0', '', '']
          return (
            <tr key={label}>
              <th scope="row" className={`${rowHead} ${i === 0 ? 'bg-[#f5c27c]' : 'bg-[#efefef]'}`}>{i + 1}</th>
              <td className={`${td} pr-0 text-[#5a52f5] ${i === 0 ? `relative ${selected}` : ''}`}>
                {label}
                {i === 0 && <i className="absolute bottom-0 left-0 size-2.5 border-[3px] border-black bg-white" />}
              </td>
              <td className={`${td} text-[#3f9a22]`}>NO</td>
              <td className={td} />
              <td className={`${td} text-[#660a96]`}>YES</td>
              <td className={`${td} text-[#660a96]`}>YES</td>
              <td className={`${td} text-[#3f9a22]`}>none</td>
              <td className={td} />
              <td className={td} />
              <td className={`${td} text-right`}>0</td>
              <td className={`${td} text-right`}>0</td>
              <td className={`${td} text-right`}>0</td>
              <td className={`${td} text-[#3f9a22]`}>NO</td>
              <td className={`${td} text-right`}>0</td>
              <td className={`${td} bg-[#e3e3e3] text-right ${count === '0' ? '' : 'text-[#b02c34]'}`}>{count}</td>
              <td className={`${td} text-right`}>{branch}</td>
              <td className={`${td} text-right`}>{volt}</td>
              <td className={td} />
              <td className={td} />
              <td className={td} />
            </tr>
          )
        })}
      </tbody>
    </table>
  )
}

function ViolationTable() {
  return (
    <table className="w-[1540px] table-fixed border-separate border-spacing-0">
      <colgroup>
        <col className="w-20" />
        <col className="w-40" />
        <col className="w-[500px]" />
        <col className="w-40" span={5} />
      </colgroup>
      <thead>
        <tr className="h-16 bg-[#f7f7f7]">
          <td className="border-r-2 border-b-2 border-black bg-[#efefef]" />
          <th scope="col" className={`${th} bg-[#fbdfba]`}>Category</th>
          <th scope="col" className={th}>Element</th>
          <th scope="col" className={th}>Value</th>
          <th scope="col" className={th}>Limit</th>
          <th scope="col" className={th}>Percent</th>
          <th scope="col" className={th}>Area Name<br />Assoc.</th>
          <th scope="col" className={th}>Nom kV Assoc.</th>
        </tr>
      </thead>
      <tbody className="text-[#444]">
        {violations.map((row, i) => (
          <tr key={row[1]}>
            <th scope="row" className={`${rowHead} ${i === 0 ? 'bg-[#fbdfba]' : 'bg-[#f3f3f3]'} text-black`}>{i + 1}</th>
            {row.map((cell, j) => (
              <td key={j} className={`${td} ${j < 2 || j === 5 ? 'text-left' : 'text-right'} ${i + j === 0 ? selected : ''}`}>
                {cell}
              </td>
            ))}
          </tr>
        ))}
      </tbody>
    </table>
  )
}

function ActionTable() {
  return (
    <table className="w-[1040px] table-fixed border-separate border-spacing-0">
      <colgroup>
        <col className="w-20" />
        <col className="w-[700px]" />
        <col className="w-[260px]" />
      </colgroup>
      <thead>
        <tr className="h-[42px] bg-[#f7f7f7]">
          <td className="border-r-2 border-b-2 border-black bg-[#efefef]" />
          <th scope="col" className={`${th} bg-[#fbdfba]`}>Actions</th>
          <th scope="col" className={`${th} pl-6 text-left`}>Model Criteria</th>
        </tr>
      </thead>
      <tbody className="text-[#444]">
        <tr>
          <th scope="row" className={`${rowHead} bg-[#fbdfba] text-black`}>1</th>
          <td className={`${td} ${selected}`}>OPEN Transformer LEMON69   69.0 (33)  TO  LEMON138  138.0 (32) CKT 1</td>
          <td className={td} />
        </tr>
      </tbody>
    </table>
  )
}

/* ---------- lower panes ---------- */

function PushButton({ width, children }: { width: string; children: ReactNode }) {
  return (
    <button className={`${width} rounded-md border-2 border-[#d2d2d2] border-b-[#bcbcbc] bg-[#fdfdfd] text-center whitespace-nowrap`}>
      {children}
    </button>
  )
}

function LowerPanes() {
  return (
    <div className="flex h-[326px] shrink-0 border-r-2 border-b-2 border-[#a0a0a0] pt-1.5">
      <section className="flex min-w-0 flex-1 flex-col pr-1 pb-0.5 pl-[3px]">
        <div role="tablist" className="flex items-end">
          <Tab active>Violations</Tab>
          <Tab>What Actually Occurred</Tab>
          <div className="h-[38px] flex-1 border-b-2 border-[#e4e4e4]" />
        </div>
        <div className="flex min-h-0 flex-1 flex-col border-x-2 border-b-2 border-[#e4e4e4] pt-2 pr-0.5 pb-1 pl-[5px]">
          <div className="flex h-9 gap-4 pl-0.5">
            <PushButton width="w-[328px]">Show related contingencies</PushButton>
            <PushButton width="w-[232px]">Combined Tables &gt;</PushButton>
          </div>
          <div className="mt-1 min-h-0 flex-1 overflow-hidden border-2 border-[#a8a8b0] bg-white p-0.5">
            <ViolationTable />
          </div>
        </div>
      </section>
      <section className="flex w-[1010px] shrink-0 border-l-2 border-[#a0a0a0] pb-0.5 pl-1">
        <div className="flex min-w-0 flex-1 flex-col">
          <div role="tablist" className="flex items-end">
            <Tab active>Definition</Tab>
            <div className="h-[38px] flex-1 border-b-2 border-[#e4e4e4]" />
          </div>
          <div className="flex min-h-0 flex-1 flex-col border-x-2 border-b-2 border-[#e4e4e4] pt-1.5 pr-1 pb-1 pl-1.5">
            <div className="flex min-h-0 flex-1 flex-col overflow-hidden border-2 border-[#a8a8b0] bg-white p-0.5">
              <div className="min-h-0 flex-1 overflow-hidden">
                <ActionTable />
              </div>
              <div className="flex h-8 shrink-0 items-center bg-[#efefef] pl-[34px]">
                <div className="h-1 w-[34px] bg-[#868686]" />
              </div>
            </div>
          </div>
        </div>
        <div className="flex w-11 shrink-0 justify-center bg-[#f7f7f7]">
          <button aria-label="Close definition" className="mt-0.5 flex h-[38px] w-9 items-center justify-center rounded-md border-2 border-[#d2d2d2] bg-[#fdfdfd]">
            <Icon size="size-4" box={16}><path d="M2 1l12 14M14 1L2 15" stroke="#000" strokeWidth="4.500" /></Icon>
          </button>
        </div>
      </section>
    </div>
  )
}

/* ---------- taskbar ---------- */

function Taskbar() {
  return (
    <footer className="grid h-24 shrink-0 grid-cols-[1fr_auto_1fr] items-center border-t-2 border-[#444] bg-[#202024] text-[23px] text-white">
      <div />
      <div className="flex items-center gap-2">
        <button aria-label="Start" className="flex w-20 justify-center">
          <Icon size="size-[46px]" box={46}>
            <defs>
              <linearGradient id="win" x1="0" y1="0" x2="1" y2="1">
                <stop offset="0" stopColor="#8ff0ff" />
                <stop offset="1" stopColor="#3c8cf8" />
              </linearGradient>
            </defs>
            <path d="M2 0h20v22H0V2zM24 0h20l2 2v20H24zM0 24h22v22H2l-2-2zM24 24h22v20l-2 2H24z" fill="url(#win)" />
          </Icon>
        </button>
        <label className="flex h-16 w-[440px] items-center gap-4 rounded-full border-2 border-[#4d4d52] bg-[#404045] pl-[22px]">
          <Icon box={32}>
            <circle cx="14" cy="13" r="10.500" stroke="#e8e8e8" strokeWidth="3" />
            <path d="M21 21l8 9" stroke="#e8e8e8" strokeWidth="3.500" strokeLinecap="round" />
          </Icon>
          <input placeholder="Search" aria-label="Search" className="w-72 bg-transparent text-[25px] outline-none placeholder:text-[#d0d0d0]" />
        </label>
        <button aria-label="Task view" className="flex w-20 justify-center">
          <Icon size="size-12" box={48}>
            <rect x="0" y="14" width="36" height="32" rx="2" fill="#6e6e6e" />
            <rect x="12" y="2" width="36" height="32" rx="2" fill="#f2f2f2" />
            <path d="M12 14h24v20H12z" fill="#a9a9a9" />
          </Icon>
        </button>
        <button aria-label="File Explorer" className="flex w-20 justify-center">
          <Icon size="size-12" box={48}>
            <path d="M0 5q0-2 2-2h14l4 5v8H0z" fill="#d89b2c" />
            <path d="M0 13l22-5h24q2 0 2 2v34q0 2-2 2H2q-2 0-2-2z" fill="#fbd263" />
            <path d="M9 46V38q0-5 5-5h20q5 0 5 5v8z" fill="#2f78cc" />
            <path d="M16 39h16" stroke="#185296" strokeWidth="2" />
          </Icon>
        </button>
        <button aria-label="Edge" className="flex w-20 justify-center">
          <Icon size="size-12" box={48}>
            <defs>
              <linearGradient id="edge" x1="0" y1="0" x2="1" y2=".5">
                <stop offset="0" stopColor="#2fa5e0" />
                <stop offset=".6" stopColor="#4cc0d8" />
                <stop offset="1" stopColor="#70dc5c" />
              </linearGradient>
            </defs>
            <circle cx="24" cy="24" r="24" fill="#2272cc" />
            <path d="M1 19Q6 0 25 0c14 0 23 11 23 21 0 8-6 12-12 12-5 0-8-2-8-4 0-1 2-2 2-6 0-6-5-11-13-11C9 12 3 15 1 19z" fill="url(#edge)" />
            <path d="M17 23c-3 13 8 21 25 16-4 6-11 9-18 9C14 46 9 33 17 23z" fill="#1b4a96" />
            <path d="M29 18q3 6-1 10 0 6 14 5l7-4v6l-6 4q-12 3-16-4-3-8 2-17z" fill="#202024" />
          </Icon>
        </button>
        <button aria-label="Simulator" className="flex h-[78px] w-20 flex-col items-center justify-between rounded-lg border-2 border-[#333338] bg-[#2d2d32] pt-3">
          <AppLogo size="size-[46px]" />
          <i className="h-1.5 w-8 rounded-full bg-[#e8a8b0]" />
        </button>
      </div>
      <div className="flex items-center justify-end pr-[39px]">
        <button aria-label="Show hidden icons">
          <Icon size="size-6" box={24}><path d="M3 17l9-10 9 10" stroke="#fff" strokeWidth="2.500" /></Icon>
        </button>
        <p className="ml-10 text-center leading-8">ENG<br />US</p>
        <div className="ml-9 flex gap-4">
          <Icon>
            <path d="M22 3H4q-3 0-3 3v15q0 3 3 3h20V15M7 30h16M12 24v6m6-6v6" stroke="#fff" strokeWidth="2" />
            <path d="M24 4q0-2 3-2t4 2v10h-7zM28 14v16M24 8h7" stroke="#fff" strokeWidth="2" />
          </Icon>
          <Icon>
            <path d="M1 12h5l8-7v22l-8-7H1zM18 11q4 5 0 10M22 7q7 9 0 18" stroke="#fff" strokeWidth="2" strokeLinejoin="round" />
            <path d="M26 3q9 13 0 26" stroke="#777" strokeWidth="2" />
          </Icon>
          <Icon>
            <path d="M10 8h16q2 0 2 2v13q0 3-3 3H5q-3 0-3-3v-6M28 14h3v6h-3" stroke="#fff" strokeWidth="2.500" />
            <path d="M5 1L0 12h4L2 20l8-10H6l3-9zM4 23V20l9-8v11z" fill="#fff" />
          </Icon>
        </div>
        <p className="ml-8 text-right leading-8">8:21 PM<br />12/18/2025</p>
      </div>
    </footer>
  )
}

export default function App() {
  return (
    <div className="flex h-screen flex-col overflow-hidden bg-[#f0f0f0] font-['Open_Sans','Noto_Sans',sans-serif] text-[22px] text-black">
      <HostBar />
      <TitleBar />
      <Menu />
      <Ribbon />

      <main className="flex min-h-0 flex-1 flex-col text-[21px]">
        <div role="tablist" className="mr-1 flex h-[42px] shrink-0 items-end">
          <Tab active>Contingencies</Tab>
          <Tab>Options</Tab>
          <Tab>Results</Tab>
          <div className="h-[38px] flex-1 border-b-2 border-[#e4e4e4]" />
        </div>
        <div className="mr-1 mb-0.5 flex min-h-0 flex-1 flex-col border-x-2 border-b-2 border-[#e4e4e4] bg-[#f9f9f9] p-1.5 pr-0.5 pb-1">
          <GridToolbar />
          <div className="flex min-h-0 flex-1 border-2 border-b-4 border-[#a8a8b0] bg-white p-0.5">
            <div className="min-w-0 flex-1 overflow-hidden">
              <ContingencyTable />
            </div>
            <div className="flex w-8 shrink-0 justify-center bg-[#fafafa] pt-8">
              <div className="h-9 w-[3px] bg-[#868686]" />
            </div>
          </div>
          <LowerPanes />
        </div>

        <div className="mr-1 flex h-[58px] shrink-0 items-center border-2 border-[#a0a0a0] bg-[#f8f8f8] pl-1.5">
          <label htmlFor="status">Status</label>
          <input
            id="status"
            readOnly
            value="Initialized"
            className="ml-2.5 h-[42px] min-w-0 flex-1 border-2 border-[#ececec] border-b-[#808080] bg-[#efefef] px-1 pb-1 text-[#e8261c]"
          />
          <label className="ml-[42px] flex w-[476px] items-center gap-1 whitespace-nowrap">
            <input type="checkbox" className="size-[26px] appearance-none rounded-md border-2 border-[#606060] bg-white" />
            Refresh Displays After Each Contingency
          </label>
        </div>

        <div className="flex h-[52px] shrink-0 gap-3 bg-[#f8f8f8] pt-2.5 pr-3 pl-3.5">
          <PushButton width="w-[146px]">Load</PushButton>
          <PushButton width="w-[146px]">Auto Insert</PushButton>
          <PushButton width="w-[102px]">Save</PushButton>
          <PushButton width="w-[126px] ml-0.5">Other &gt;</PushButton>
          <PushButton width="ml-auto w-[142px]">Start Run</PushButton>
          <PushButton width="w-[108px]">Close</PushButton>
          <PushButton width="w-[118px]">Help</PushButton>
        </div>

        <p className="h-[46px] shrink-0 border-t-2 border-[#d0d0d0] pl-0.5 leading-[44px]">
          Sum of the Load MW islanded (disconnected) during contingency.
        </p>
      </main>

      <Taskbar />
    </div>
  )
}
